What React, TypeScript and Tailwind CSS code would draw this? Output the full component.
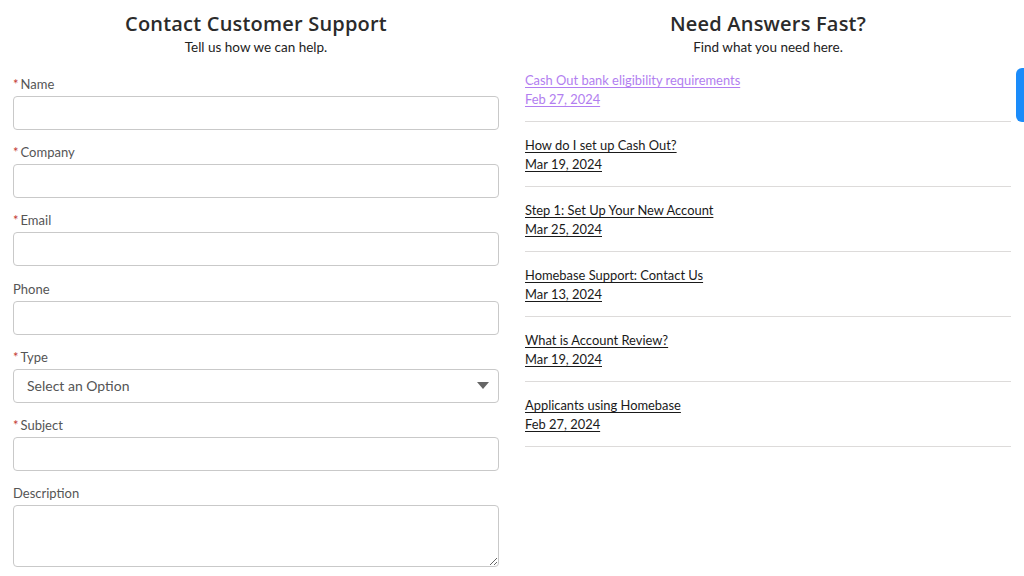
import React from "react";

const fields = [
  { label: "Name", required: true, kind: "input" },
  { label: "Company", required: true, kind: "input" },
  { label: "Email", required: true, kind: "input" },
  { label: "Phone", required: false, kind: "input" },
  { label: "Type", required: true, kind: "select" },
  { label: "Subject", required: true, kind: "input" },
  { label: "Description", required: false, kind: "textarea" },
];

const articles = [
  { title: "Cash Out bank eligibility requirements", date: "Feb 27, 2024", visited: true },
  { title: "How do I set up Cash Out?", date: "Mar 19, 2024" },
  { title: "Step 1: Set Up Your New Account", date: "Mar 25, 2024" },
  { title: "Homebase Support: Contact Us", date: "Mar 13, 2024" },
  { title: "What is Account Review?", date: "Mar 19, 2024" },
  { title: "Applicants using Homebase", date: "Feb 27, 2024" },
];

function SectionHeader({ title, subtitle }: { title: string; subtitle: string }) {
  return (
    <div className="pt-[12px] text-center">
      <h2 className="text-[20px] leading-[24px] font-semibold tracking-[0.2px] text-[#2b2b2b] [font-family:'Open_Sans',sans-serif]">
        {title}
      </h2>
      <p className="text-[13.5px] leading-[20px] text-[#222] mt-[1px]">{subtitle}</p>
    </div>
  );
}

export default function App() {
  return (
    <div className="relative w-full h-[576px] overflow-hidden bg-white [font-family:Lato,'Liberation_Sans',sans-serif]">
      <div className="grid grid-cols-2 gap-[26px] px-[13px]">
        {/* Contact form */}
        <div>
          <SectionHeader title="Contact Customer Support" subtitle="Tell us how we can help." />
          <form className="mt-[18px] flex flex-col gap-[13.2px]">
            {fields.map((f) => (
              <div key={f.label}>
                <label className="block text-[13px] leading-[18px] text-[#555]">
                  {f.required && <span className="text-[#c23934] mr-[2px]">*</span>}
                  {f.label}
                </label>
                {f.kind === "input" && (
                  <input
                    type="text"
                    className="mt-[3px] block w-full h-[34px] rounded-[4px] border border-[#c9c9c9] bg-white px-3 outline-none"
                  />
                )}
                {f.kind === "select" && (
                  <div className="relative mt-[3px]">
                    <div className="flex h-[34px] w-full items-center rounded-[4px] border border-[#c9c9c9] bg-white pl-[13px] text-[14px] text-[#555]">
                      Select an Option
                    </div>
                    <svg
                      className="absolute right-[10px] top-[13px]"
                      width="12"
                      height="8"
                      viewBox="0 0 12 8"
                    >
                      <path d="M0 0h12L6 7z" fill="#666" />
                    </svg>
                  </div>
                )}
                {f.kind === "textarea" && (
                  <textarea className="mt-[3px] block w-full h-[62px] rounded-[4px] border border-[#c9c9c9] bg-white px-3 py-2 outline-none resize-y" />
                )}
              </div>
            ))}
          </form>
        </div>

        {/* Articles */}
        <div>
          <SectionHeader title="Need Answers Fast?" subtitle="Find what you need here." />
          <ul>
            {articles.map((a) => (
              <li key={a.title} className="pt-[13px] pb-[11px] border-b border-[#dddbda]">
                <a
                  href="#"
                  className={`block w-fit text-[12.9px] leading-[20px] underline underline-offset-[2px] ${
                    a.visited ? "text-[#b27ef0]" : "text-[#1a1a1a]"
                  }`}
                >
                  {a.title}
                </a>
                <a
                  href="#"
                  className={`block w-fit text-[12.9px] leading-[19px] underline underline-offset-[2px] ${
                    a.visited ? "text-[#b27ef0]" : "text-[#1a1a1a]"
                  }`}
                >
                  {a.date}
                </a>
                <div className="h-px" />
              </li>
            ))}
          </ul>
        </div>
      </div>

      {/* Side tab */}
      <div className="absolute right-0 top-[68px] h-[54px] w-[8px] rounded-l-[6px] bg-[#1b8cfa]" />
    </div>
  );
}
